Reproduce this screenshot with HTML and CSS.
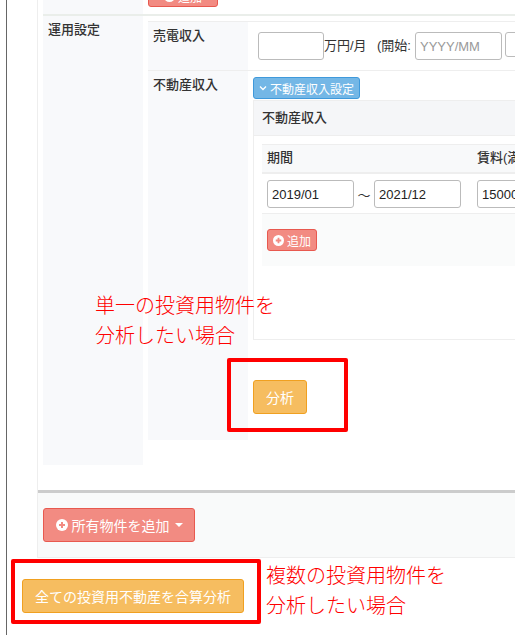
FILE: index.html
```html
<!DOCTYPE html>
<html lang="ja">
<head>
    <meta charset="UTF-8">
    <title>所有物件</title>
    <link rel="stylesheet" href="styles.css">
</head>
<body>
    <div class="page">
        <div class="panel">
            <div class="panel-body">
                <div class="row-prev">
                    <div class="side-cell"></div>
                    <div class="prev-cell">
                        <button class="btn btn-red btn-prev">
                            <svg class="plus" viewBox="0 0 12 12"><circle cx="6" cy="6" r="6" fill="#fff"/><path d="M6 3v6M3 6h6" stroke="#f28b82" stroke-width="2"/></svg>追加
                        </button>
                    </div>
                </div>
                <div class="row-main">
                    <div class="side-cell side-title">運用設定</div>
                    <div class="main-cell">
                        <div class="inner-row inner-row-power">
                            <div class="inner-head">売電収入</div>
                            <div class="inner-body power-line">
                                <input class="input input-amount" type="text">
                                <span class="unit">万円/月</span>
                                <span class="start-label">(開始:</span>
                                <input class="input input-date" type="text" placeholder="YYYY/MM">
                                <input class="input input-small" type="text">
                            </div>
                        </div>
                        <div class="inner-row inner-row-estate">
                            <div class="inner-head">不動産収入</div>
                            <div class="inner-body estate-body">
                                <button class="btn btn-blue">
                                    <svg class="chevron" viewBox="0 0 8 6"><path d="M1 1.5l3 3 3-3" fill="none" stroke="#fff" stroke-width="1.3"/></svg>不動産収入設定
                                </button>
                                <div class="estate-panel">
                                    <div class="estate-head">不動産収入</div>
                                    <div class="estate-content">
                                        <div class="rent-head">
                                            <div class="col-period">期間</div>
                                            <div class="col-rent">賃料(満室時)</div>
                                        </div>
                                        <div class="rent-row">
                                            <div class="col-period period-inputs">
                                                <input class="input input-period" type="text" value="2019/01">
                                                <span class="tilde">～</span>
                                                <input class="input input-period" type="text" value="2021/12">
                                            </div>
                                            <div class="col-rent">
                                                <input class="input input-rent" type="text" value="150000">
                                            </div>
                                        </div>
                                        <div class="rent-foot">
                                            <button class="btn btn-red btn-add">
                                                <svg class="plus" viewBox="0 0 12 12"><circle cx="6" cy="6" r="6" fill="#fff"/><path d="M6 3v6M3 6h6" stroke="#f28b82" stroke-width="2"/></svg>追加
                                            </button>
                                        </div>
                                    </div>
                                </div>
                                <button class="btn btn-orange btn-analyze">分析</button>
                            </div>
                        </div>
                    </div>
                </div>
            </div>
            <div class="panel-footer">
                <button class="btn btn-red btn-own">
                    <svg class="plus plus-big" viewBox="0 0 12 12"><circle cx="6" cy="6" r="6" fill="#fff"/><path d="M6 3v6M3 6h6" stroke="#f28b82" stroke-width="2"/></svg>所有物件を追加<span class="caret"></span>
                </button>
            </div>
        </div>
        <div class="total-area">
            <button class="btn btn-orange btn-total">全ての投資用不動産を合算分析</button>
        </div>
    </div>

    <div class="mark mark-single"></div>
    <div class="mark mark-total"></div>
    <p class="note note-single">単一の投資用物件を<br>分析したい場合</p>
    <p class="note note-total">複数の投資用物件を<br>分析したい場合</p>
</body>
</html>
```

FILE: styles.css
```css
html, body {
    margin: 0;
    height: 635px;
    overflow: hidden;
    background-color: #fff;
    color: #333;
    font-family: "Liberation Sans", "Noto Sans CJK JP", sans-serif;
    font-size: 13px;
}

.page {
    position: relative;
    width: 600px;
    height: 635px;
    margin-left: 6px;
    padding-left: 30px;
    border-left: 1px solid #666;
    box-sizing: border-box;
}

.panel {
    height: 558px;
    border-left: 1px solid #eee;
    box-sizing: border-box;
}

.panel-body {
    height: 490px;
    padding-left: 5px;
    box-sizing: border-box;
}

/* previous row, cut off by the top of the window */
.row-prev {
    display: flex;
    height: 16px;
    border-bottom: 2px solid #eaeeea;
    box-sizing: border-box;
}

.side-cell {
    flex: none;
    width: 100px;
    background-color: #f8f9fb;
}

.prev-cell {
    padding-left: 5px;
}

.row-main {
    display: flex;
    height: 449px;
}

.side-title {
    padding: 5px;
    font-weight: 500;
    line-height: 18px;
    box-sizing: border-box;
}

.main-cell {
    flex: 1;
    padding: 5px 0 0 5px;
}

.inner-row {
    display: flex;
    border-top: 1px solid #eee;
    box-sizing: border-box;
}

.inner-row-power {
    height: 49px;
}

.inner-row-estate {
    height: 370px;
}

.inner-head {
    flex: none;
    width: 100px;
    padding: 5px;
    font-weight: 500;
    line-height: 18px;
    background-color: #f8f9fb;
    box-sizing: border-box;
}

.inner-body {
    flex: 1;
    padding: 5px;
    font-size: 13px;
}

.power-line {
    display: flex;
    align-items: flex-start;
    padding: 10px 0 0 10px;
}

.input {
    padding: 0 4px;
    border: 1px solid #bbb;
    border-radius: 3px;
    background-color: #fff;
    box-sizing: border-box;
    color: #222;
    font-family: "Liberation Sans", "Noto Sans CJK JP", sans-serif;
    font-size: 13px;
    outline: none;
}

.input::placeholder {
    color: #999;
}

.input-amount {
    flex: none;
    width: 66px;
    height: 28px;
}

.unit {
    width: 53px;
    line-height: 28px;
    flex: none;
}

.start-label {
    width: 38px;
    line-height: 28px;
    flex: none;
}

.input-date {
    flex: none;
    width: 87px;
    height: 28px;
}

.input-small {
    flex: none;
    width: 60px;
    height: 25px;
    margin-left: 3px;
}

.btn {
    display: inline-flex;
    align-items: center;
    justify-content: center;
    padding: 0;
    border: 1px solid;
    border-radius: 3px;
    box-sizing: border-box;
    color: #fff;
    font-family: "Liberation Sans", "Noto Sans CJK JP", sans-serif;
    font-size: 14px;
    cursor: pointer;
}

.btn-red {
    background-color: #f28b82;
    border-color: #e8594f;
}

.btn-orange {
    background-color: #f6bd60;
    border-color: #f0a020;
}

.btn-prev {
    display: flex;
    width: 70px;
    height: 22px;
    margin-top: -15px;
    font-size: 12px;
}

.plus {
    width: 11px;
    height: 11px;
    margin-right: 3px;
}

.plus-big {
    width: 12px;
    height: 12px;
    margin-right: 4px;
}

.chevron {
    width: 8px;
    height: 6px;
    margin-right: 3px;
}

.estate-body {
    padding: 6px 0 0 5px;
}

.btn-blue {
    display: flex;
    justify-content: flex-start;
    width: 107px;
    height: 22px;
    padding-left: 5px;
    background-color: #74b7e6;
    border-color: #3f99db;
    font-size: 12px;
}

.estate-panel {
    height: 240px;
    margin-top: 1px;
    border: 1px solid #eee;
    box-sizing: border-box;
}

.estate-head {
    height: 35px;
    padding-left: 8px;
    font-weight: 500;
    line-height: 33px;
    background-color: #f5f6f8;
    border-bottom: 1px solid #eee;
    box-sizing: border-box;
}

.estate-content {
    padding: 8px 0 0 8px;
}

.rent-head {
    display: flex;
    height: 30px;
    border-top: 1px solid #eee;
    border-bottom: 2px solid #eee;
    background-color: #f8f9fa;
    font-weight: 500;
    line-height: 26px;
    box-sizing: border-box;
}

.rent-row {
    display: flex;
    height: 39px;
    align-items: flex-start;
    padding-top: 6px;
    box-sizing: border-box;
}

.col-period {
    flex: none;
    width: 215px;
    padding-left: 5px;
    box-sizing: border-box;
}

.col-rent {
    flex: 1;
}

.period-inputs {
    display: flex;
    align-items: center;
}

.input-period {
    width: 87px;
    height: 28px;
}

.tilde {
    width: 20px;
    text-align: center;
}

.input-rent {
    width: 100px;
    height: 28px;
}

.rent-foot {
    height: 53px;
    padding: 15px 0 0 5px;
    background-color: #fafbfb;
    border-top: 1px solid #eee;
    box-sizing: border-box;
}

.btn-add {
    width: 50px;
    height: 22px;
    font-size: 12px;
}

.btn-analyze {
    display: flex;
    width: 54px;
    height: 34px;
    margin-top: 40px;
}

.panel-footer {
    height: 68px;
    padding: 15px 0 0 5px;
    border-top: 3px solid #ccc;
    border-bottom: 1px solid #eee;
    background-color: #f9fafa;
    box-sizing: border-box;
}

.btn-own {
    width: 152px;
    height: 34px;
}

.caret {
    width: 0;
    height: 0;
    margin-left: 5px;
    border-top: 4px solid #fff;
    border-left: 4px solid transparent;
    border-right: 4px solid transparent;
}

.total-area {
    margin-left: -15px;
    padding-top: 21px;
}

.btn-total {
    display: flex;
    width: 222px;
    height: 34px;
}

/* red notes drawn over the screenshot */
.mark {
    position: absolute;
    border: 4px solid #f00;
    border-radius: 2px;
    box-sizing: border-box;
}

.mark-single {
    left: 227px;
    top: 358px;
    width: 121px;
    height: 74px;
}

.mark-total {
    left: 11px;
    top: 559px;
    width: 250px;
    height: 65px;
}

.note {
    position: absolute;
    margin: 0;
    color: #f00;
    font-size: 20px;
    font-weight: 300;
    line-height: 30px;
    white-space: nowrap;
}

.note-single {
    left: 95px;
    top: 291px;
}

.note-total {
    left: 266px;
    top: 561px;
}
```
